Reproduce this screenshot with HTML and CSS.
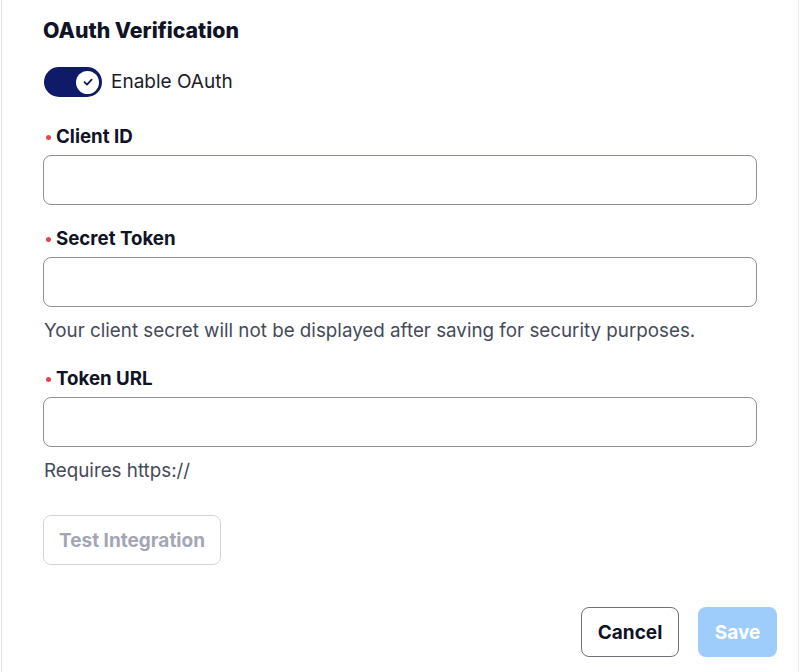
FILE: index.html
```html
<!DOCTYPE html>
<html>
<head>
<meta charset="utf-8">
<link rel="stylesheet" href="styles.css">
</head>
<body>
<div class="panel">
  <h2 class="title">OAuth Verification</h2>
  <div class="toggle-row">
    <span class="toggle">
      <span class="knob">
        <svg width="12" height="12" viewBox="0 0 12 12"><path d="M2.5 6.2 L5 8.6 L9.6 3.6" fill="none" stroke="#101a64" stroke-width="1.8" stroke-linecap="round" stroke-linejoin="round"/></svg>
      </span>
    </span>
    <span class="toggle-label">Enable OAuth</span>
  </div>

  <div class="field">
    <label class="label"><span class="dot"></span>Client ID</label>
    <input class="input" type="text">
  </div>

  <div class="field">
    <label class="label"><span class="dot"></span>Secret Token</label>
    <input class="input" type="text">
    <p class="help">Your client secret will not be displayed after saving for security purposes.</p>
  </div>

  <div class="field">
    <label class="label"><span class="dot"></span>Token URL</label>
    <input class="input" type="text">
    <p class="help">Requires https://</p>
  </div>

  <button class="btn btn-test" disabled>Test Integration</button>

  <div class="actions">
    <button class="btn btn-cancel">Cancel</button>
    <button class="btn btn-save" disabled>Save</button>
  </div>
</div>
</body>
</html>
```

FILE: styles.css
```css
html, body {
  margin: 0;
  padding: 0;
  background: #ffffff;
}
body {
  font-family: Inter, "Noto Sans", "Liberation Sans", sans-serif;
  color: #111322;
}
.panel {
  box-sizing: border-box;
  width: 798px;
  height: 672px;
  margin-left: 1px;
  border-left: 1px solid #e4e4e8;
  border-right: 1px solid #ececf0;
  padding: 16px 41px 0 41px;
  display: flex;
  flex-direction: column;
}
.title {
  margin: 0;
  font-size: 21.3px;
  font-weight: 800;
  line-height: 28px;
  color: #101326;
}
.toggle-row {
  display: flex;
  align-items: center;
  gap: 9px;
  margin-top: 23px;
  padding-left: 1px;
}
.toggle {
  width: 58px;
  height: 30px;
  border-radius: 15px;
  background: #0f1a68;
  display: flex;
  align-items: center;
  justify-content: flex-end;
  padding-right: 3px;
  box-sizing: border-box;
}
.knob {
  width: 23px;
  height: 23px;
  border-radius: 50%;
  background: #ffffff;
  display: flex;
  align-items: center;
  justify-content: center;
}
.toggle-label {
  font-size: 19px;
  line-height: 24px;
  color: #1a1c2a;
}
.field {
  display: flex;
  flex-direction: column;
}
.toggle-row + .field {
  margin-top: 28px;
}
.field + .field {
  margin-top: 22px;
}
.label {
  display: flex;
  align-items: center;
  font-size: 18.7px;
  font-weight: 700;
  line-height: 24px;
  color: #101326;
}
.dot {
  width: 5px;
  height: 5px;
  border-radius: 50%;
  background: #e2474b;
  margin: 0 5px 0 3px;
}
.input {
  box-sizing: border-box;
  width: 714px;
  height: 50px;
  margin-top: 6px;
  border: 1px solid #8f919c;
  border-radius: 8px;
  background: #fff;
  font: inherit;
}
.help {
  margin: 12px 0 2px 1px;
  font-size: 18.8px;
  line-height: 24px;
  color: #454a5a;
}
.btn {
  box-sizing: border-box;
  height: 50px;
  border-radius: 8px;
  font-family: inherit;
  font-size: 19px;
  font-weight: 700;
  cursor: pointer;
}
.btn-test {
  align-self: flex-start;
  margin-top: 30px;
  width: 178px;
  background: #fff;
  border: 1px solid #d4d5da;
  color: #a3a6b3;
}
.actions {
  display: flex;
  justify-content: flex-end;
  gap: 19px;
  margin-top: 42px;
  margin-right: -20px;
}
.btn-cancel {
  width: 98px;
  background: #fff;
  border: 1px solid #6e717c;
  color: #101326;
}
.btn-save {
  width: 79px;
  background: #9fcdfb;
  border: none;
  color: #ffffff;
}
```
